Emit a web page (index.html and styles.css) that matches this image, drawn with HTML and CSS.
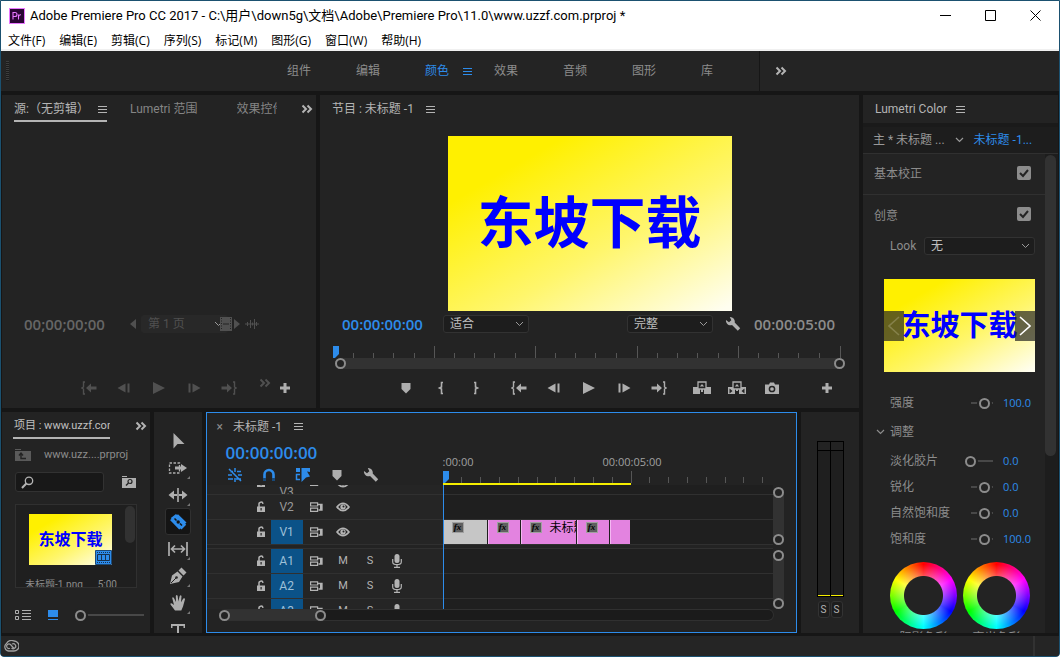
FILE: index.html
```
<!DOCTYPE html>
<html lang="zh-CN">
<head>
<meta charset="utf-8">
<title>Adobe Premiere Pro CC 2017</title>
<link rel="stylesheet" href="styles.css">
</head>
<body>
<svg class="sprite" aria-hidden="true">
  <symbol id="menu" viewBox="0 0 9 9"><path d="M0 1.500h9M0 4.500h9M0 7.500h9" fill="none" stroke="currentColor"/></symbol>
  <symbol id="more" viewBox="0 0 12 10"><path d="M1.500 1.500L5 5 1.500 8.500M6.500 1.500L10 5 6.500 8.500" fill="none" stroke="currentColor" stroke-width="2"/></symbol>
  <symbol id="plus" viewBox="0 0 16 16"><path d="M6.500 3h3v3.500H13v3H9.500V13h-3V9.500H3v-3h3.500z" fill="currentColor"/></symbol>
  <symbol id="marker" viewBox="0 0 16 16"><path d="M3.500 3h9v6L8 13.500 3.500 9z" fill="currentColor"/></symbol>
  <symbol id="mark-in" viewBox="0 0 16 16"><path d="M10 2.500H8.500v4.500L6.500 8l2 1v4.500H10" fill="none" stroke="currentColor" stroke-width="1.600"/></symbol>
  <symbol id="mark-out" viewBox="0 0 16 16"><path d="M6 2.500h1.500v4.500l2 1-2 1v4.500H6" fill="none" stroke="currentColor" stroke-width="1.600"/></symbol>
  <symbol id="go-in" viewBox="0 0 16 16"><path d="M4 2H2.500v5L1 8l1.500 1v5H4" fill="none" stroke="currentColor" stroke-width="1.400"/><path d="M5 8l5-4.500V6.500h5.500v3H10v3z" fill="currentColor"/></symbol>
  <symbol id="go-out" viewBox="0 0 16 16"><path d="M12 2h1.500v5L15 8l-1.500 1v5H12" fill="none" stroke="currentColor" stroke-width="1.400"/><path d="M11 8L6 3.500V6.500H.5v3H6v3z" fill="currentColor"/></symbol>
  <symbol id="step-back" viewBox="0 0 16 16"><path d="M9.500 3.500v9L1.500 8zM11.500 3.500h2v9h-2z" fill="currentColor"/></symbol>
  <symbol id="step-fwd" viewBox="0 0 16 16"><path d="M6.500 3.500v9l8-4.500zM2.500 3.500h2v9h-2z" fill="currentColor"/></symbol>
  <symbol id="play" viewBox="0 0 16 16"><path d="M2 2v12l12-6z" fill="currentColor"/></symbol>
  <symbol id="lift" viewBox="0 0 20 16"><path d="M1 7h7v7H1zM12 7h7v7h-7z" fill="currentColor"/><path d="M6 2h8v7H6z" fill="#232323" stroke="currentColor" stroke-width="1.300"/><path d="M7.800 6.500L10 4l2.200 2.500zM9 9h2v3H9z" fill="currentColor"/></symbol>
  <symbol id="extract" viewBox="0 0 20 16"><path d="M1 7h7v7H1zM12 7h7v7h-7z" fill="currentColor"/><path d="M6 2h8v7H6z" fill="#232323" stroke="currentColor" stroke-width="1.300"/><path d="M7.800 6.500L10 4l2.200 2.500zM9 9h2v2H9z" fill="currentColor"/><path d="M2.500 8.500L5.500 11l-3 2.500zM17.500 8.500l-3 2.500 3 2.500z" fill="#232323"/></symbol>
  <symbol id="camera" viewBox="0 0 16 16"><path d="M1 4.500h4l1-2h4l1 2h4V14H1z" fill="currentColor"/><circle cx="8" cy="9" r="2.600" fill="none" stroke="#232323" stroke-width="1.500"/></symbol>
  <symbol id="wrench" viewBox="0 0 16 16"><path d="M4.800 1A4.600 4.600 0 0 1 9.700 6.500L15.200 12.300 12.800 14.700 7 9.100A4.600 4.600 0 0 1 1 4L4 6.300 6.300 4.200z" fill="currentColor"/></symbol>
  <symbol id="left" viewBox="0 0 8 10"><path d="M7 0v10L1 5z" fill="currentColor"/></symbol>
  <symbol id="right" viewBox="0 0 8 10"><path d="M1 0v10l6-5z" fill="currentColor"/></symbol>
  <symbol id="film" viewBox="0 0 12 14"><path d="M0 0h12v14H0z" fill="currentColor"/><path d="M1.500 1v12M10.500 1v12" stroke="#232323" stroke-dasharray="1 1.500"/><path d="M3 7h6" stroke="#232323"/></symbol>
  <symbol id="wave" viewBox="0 0 14 10"><path d="M0 5h14M2.500 3v4M5.500 1v8M7.500 3.500v3M9.500 0v10M11.500 3v4" stroke="currentColor" fill="none"/></symbol>
  <symbol id="lock" viewBox="0 0 10 12"><path d="M1 5.500h8V11H1z" fill="currentColor"/><path d="M3 6V3.500a2 2 0 0 1 4-.7" fill="none" stroke="currentColor" stroke-width="1.500"/><path d="M4.500 7h1.200v2.500H4.500z" fill="#232323"/></symbol>
  <symbol id="sync" viewBox="0 0 13 11"><path d="M.6.800h7v3.200h-7zM.6 6.200h7v3.200h-7z" fill="none" stroke="currentColor" stroke-width="1.200"/><path d="M7.500 2.500H12v5.500H8.500" fill="none" stroke="currentColor" stroke-width="1.300"/><path d="M10 2h2v6h-2z" fill="currentColor"/></symbol>
  <symbol id="eye" viewBox="0 0 14 10"><path d="M1 5Q7-2.500 13 5 7 12.500 1 5z" fill="none" stroke="currentColor" stroke-width="1.700"/><circle cx="7" cy="5" r="2.700" fill="currentColor"/><circle cx="7.500" cy="4.500" r="1" fill="#232323"/></symbol>
  <symbol id="mic" viewBox="0 0 10 14"><rect x="2.500" y="0" width="5" height="9" rx="2.500" fill="currentColor"/><path d="M.7 5v3q0 2.700 4.300 2.700T9.300 8V5M5 11v2M2 13.300h6" fill="none" stroke="currentColor" stroke-width="1.200"/></symbol>
  <symbol id="magnify" viewBox="0 0 13 13"><circle cx="8" cy="4.800" r="3.700" fill="none" stroke="currentColor" stroke-width="1.300"/><path d="M5.300 7.500L1 12" stroke="currentColor" stroke-width="2"/></symbol>
  <symbol id="chev" viewBox="0 0 9 6"><path d="M1 1l3.500 3.500L8 1" fill="none" stroke="currentColor" stroke-width="1.200"/></symbol>
  <symbol id="head" viewBox="0 0 6 12"><path d="M0 0h6v8L2 12H0z" fill="#2d8ceb"/></symbol>
</svg>

<div class="window">
  <header class="titlebar">
    <svg class="app-logo" viewBox="0 0 16 16" aria-hidden="true"><rect x=".5" y=".5" width="15" height="15" fill="#2a0634" stroke="#e878ff"/><path d="M4 11.500v-7h2a1.900 1.900 0 0 1 0 4H4M9.500 11.500v-5M9.500 8.500q.5-1.800 2.500-1.700" fill="none" stroke="#e878ff" stroke-width="1.100"/></svg>
    <h1 class="title">Adobe Premiere Pro CC 2017 - C:\用户\down5g\文档\Adobe\Premiere Pro\11.0\www.uzzf.com.prproj *</h1>
    <div class="win-buttons">
      <button aria-label="最小化"><svg viewBox="0 0 11 11"><path d="M0 5.500h11" stroke="#000"/></svg></button>
      <button aria-label="最大化"><svg viewBox="0 0 11 11"><path d="M.5.5h10v10H.5z" fill="none" stroke="#000"/></svg></button>
      <button aria-label="关闭"><svg viewBox="0 0 11 11"><path d="M.5.5l10 10M10.500.5l-10 10" stroke="#000"/></svg></button>
    </div>
  </header>
  <nav class="menubar">
    <button>文件(F)</button><button>编辑(E)</button><button>剪辑(C)</button><button>序列(S)</button><button>标记(M)</button><button>图形(G)</button><button>窗口(W)</button><button>帮助(H)</button>
  </nav>

  <nav class="workspaces">
    <span class="grip"></span>
    <div class="ws-list">
      <button>组件</button><button>编辑</button><button class="active">颜色<svg class="i9"><use href="#menu"/></svg></button><button>效果</button><button>音频</button><button>图形</button><button>库</button>
    </div>
    <button class="ws-more" aria-label="更多工作区"><svg class="i-more"><use href="#more"/></svg></button>
  </nav>

  <main class="panels">
    <div class="left-area">
      <div class="row-top">
        <section class="panel source">
          <div class="tabs">
            <button class="tab active">源:（无剪辑）<svg class="i9"><use href="#menu"/></svg></button>
            <button class="tab dim">Lumetri 范围</button>
            <button class="tab dim cut">效果控件</button>
            <button class="tabs-more" aria-label="更多面板"><svg class="i-more"><use href="#more"/></svg></button>
          </div>
          <div class="space"></div>
          <div class="source-info">
            <span class="timecode">00;00;00;00</span>
            <div class="pager">
              <button aria-label="上一页"><svg class="i-arrow"><use href="#left"/></svg></button>
              <select aria-label="页" disabled><option>第 1 页</option></select>
              <svg class="i-film"><use href="#film"/></svg>
              <button aria-label="下一页"><svg class="i-arrow"><use href="#right"/></svg></button>
              <svg class="i-wave"><use href="#wave"/></svg>
            </div>
          </div>
          <div class="transport">
            <div class="group">
              <button aria-label="转到入点"><svg class="i16"><use href="#go-in"/></svg></button>
              <button aria-label="后退一帧"><svg class="i16"><use href="#step-back"/></svg></button>
              <button aria-label="播放"><svg class="i16"><use href="#play"/></svg></button>
              <button aria-label="前进一帧"><svg class="i16"><use href="#step-fwd"/></svg></button>
              <button aria-label="转到出点"><svg class="i16"><use href="#go-out"/></svg></button>
            </div>
            <div class="group tight">
              <button class="raised" aria-label="更多"><svg class="i-more"><use href="#more"/></svg></button>
              <button class="bright" aria-label="按钮编辑器"><svg class="i16"><use href="#plus"/></svg></button>
            </div>
          </div>
        </section>

        <section class="panel program">
          <div class="tabs"><button class="tab">节目 : 未标题 -1<svg class="i9"><use href="#menu"/></svg></button></div>
          <div class="viewer"><div class="art">东坡下载</div></div>
          <div class="program-info">
            <span class="timecode blue">00:00:00:00</span>
            <select class="zoom" aria-label="缩放级别"><option>适合</option></select>
            <select class="quality" aria-label="播放分辨率"><option>完整</option></select>
            <button aria-label="设置"><svg class="i16"><use href="#wrench"/></svg></button>
            <span class="timecode">00:00:05:00</span>
          </div>
          <div class="mini-ruler">
            <svg class="head"><use href="#head"/></svg>
            <svg class="ticks" viewBox="0 0 508 12" preserveAspectRatio="none"><path d="M101.500 0v12M202.500 0v12M304.500 0v12M405.500 0v12M507.500 0v12M20.500 7v5M40.500 7v5M60.500 7v5M81.500 7v5M121.500 7v5M141.500 7v5M161.500 7v5M182.500 7v5M222.500 7v5M242.500 7v5M262.500 7v5M283.500 7v5M324.500 7v5M344.500 7v5M364.500 7v5M385.500 7v5M425.500 7v5M445.500 7v5M465.500 7v5M486.500 7v5" stroke="#565656"/></svg>
          </div>
          <div class="zoombar"><i></i><i></i></div>
          <div class="transport">
            <div class="group">
              <button aria-label="添加标记"><svg class="i16"><use href="#marker"/></svg></button>
              <button aria-label="标记入点"><svg class="i16"><use href="#mark-in"/></svg></button>
              <button aria-label="标记出点"><svg class="i16"><use href="#mark-out"/></svg></button>
            </div>
            <div class="group">
              <button aria-label="转到入点"><svg class="i16"><use href="#go-in"/></svg></button>
              <button aria-label="后退一帧"><svg class="i16"><use href="#step-back"/></svg></button>
              <button aria-label="播放"><svg class="i16"><use href="#play"/></svg></button>
              <button aria-label="前进一帧"><svg class="i16"><use href="#step-fwd"/></svg></button>
              <button aria-label="转到出点"><svg class="i16"><use href="#go-out"/></svg></button>
            </div>
            <div class="group">
              <button aria-label="提升"><svg class="i20"><use href="#lift"/></svg></button>
              <button aria-label="提取"><svg class="i20"><use href="#extract"/></svg></button>
              <button aria-label="导出帧"><svg class="i16"><use href="#camera"/></svg></button>
            </div>
            <button class="last" aria-label="按钮编辑器"><svg class="i16"><use href="#plus"/></svg></button>
          </div>
        </section>
      </div>

      <div class="row-bottom">
        <section class="panel project">
          <div class="tabs">
            <button class="tab active cut">项目 : www.uzzf.com</button>
            <button class="tabs-more" aria-label="更多面板"><svg class="i-more"><use href="#more"/></svg></button>
          </div>
          <div class="bin-path">
            <svg class="i16" viewBox="0 0 16 16"><path d="M0 2.500h6" stroke="#5a5a5a"/><path d="M0 4h16v10H0z" fill="#5a5a5a"/><path d="M4 8.500l2-2.500 2 2.500M6 7v4.500h5" fill="none" stroke="#232323" stroke-width="1.400"/></svg>
            <span>www.uzz....prproj</span>
          </div>
          <div class="bin-search">
            <label class="search"><svg class="i13"><use href="#magnify"/></svg><input type="text" aria-label="搜索"></label>
            <button aria-label="搜索素材箱"><svg class="i-bin" viewBox="0 0 14 12"><path d="M0 .5h5" stroke="#aeaeae"/><path d="M0 2h14v10H0z" fill="#aeaeae"/><circle cx="8" cy="5.500" r="2" fill="none" stroke="#232323" stroke-width="1.200"/><path d="M6.500 7L4 9.500" stroke="#232323" stroke-width="1.400"/></svg></button>
          </div>
          <div class="bin">
            <div class="clip-card">
              <div class="art small">东坡下载
                <svg class="seq-badge" viewBox="0 0 17 15"><path d="M.5.5h16v14H.5z" fill="#2d8ceb" stroke="#1c4a78"/><path d="M2 2.500h13M2 12.500h13" stroke="#17324f" stroke-dasharray="1 1"/><path d="M2.500 4.500h12v6h-12zM6.500 4.500v6M10.500 4.500v6" fill="none" stroke="#17324f"/></svg>
              </div>
              <div class="clip-label"><span>未标题-1.png</span><span>5:00</span></div>
            </div>
            <span class="bin-scroll"></span>
          </div>
          <div class="view-bar">
            <button aria-label="列表视图"><svg class="i16" viewBox="0 0 16 12"><path d="M.5 1.500h3v3h-3zM.5 7.500h3v3h-3z" fill="none" stroke="#aeaeae"/><path d="M7 1.500h9M7 4.500h9M7 7.500h9M7 10.500h9" stroke="#aeaeae"/></svg></button>
            <button aria-label="图标视图"><svg class="i10" viewBox="0 0 10 10"><path d="M0 0h10v7H0zM0 9h10v1H0z" fill="#2d8ceb"/></svg></button>
            <input class="slider wide" type="range" value="0" aria-label="缩略图大小">
          </div>
        </section>

        <section class="panel tools" aria-label="工具">
          <button aria-label="选择工具"><svg viewBox="0 0 20 20"><path d="M5.500 2v15.500l4-4.500h7z" fill="#aeaeae"/></svg></button>
          <button aria-label="向前选择轨道工具" class="more"><svg viewBox="0 0 20 20"><path d="M1.500 5h10v10h-10z" fill="none" stroke="#aeaeae" stroke-width="1.300" stroke-dasharray="2.500 1.500"/><path d="M7 8.500h6V6l6 4-6 4v-2.500H7z" fill="#aeaeae"/></svg></button>
          <button aria-label="波纹编辑工具" class="more"><svg viewBox="0 0 20 20"><path d="M9.200 3h1.600v14H9.200zM.5 10L6 5.500v3.500h3v2H6v3.500zM19.500 10L14 5.500v3.500h-3v2h3v3.500z" fill="#aeaeae"/></svg></button>
          <button aria-label="剃刀工具" class="chosen"><svg viewBox="0 0 20 20"><path d="M2 8l1.500-1-.7-1L8 2l1 1 1-.7 8.500 8.200-1.300 1.200 1 1L13.500 17.500l-1-1-1.300 1z" fill="#2d8ceb"/><path d="M6.500 6.500l2 2M12 11.500l2 2" stroke="#141414" stroke-width="1.500"/><circle cx="10.200" cy="10" r="1.700" fill="#141414"/></svg></button>
          <button aria-label="外滑工具" class="more"><svg viewBox="0 0 20 20"><path d="M1 3v14M19 3v14M3 10h14M7 6.500L3.500 10 7 13.500M13 6.500l3.500 3.500-3.500 3.500" fill="none" stroke="#aeaeae" stroke-width="1.700"/></svg></button>
          <button aria-label="钢笔工具" class="more"><svg viewBox="0 0 20 20"><path d="M2 18l2-8.500 5.500-4 5 5-3.500 5.500zM10.500 4.500l3-3 5 5-3 3z" fill="#aeaeae"/><path d="M3 17l5-5" stroke="#232323"/><circle cx="8.500" cy="11.500" r="1.300" fill="#232323"/></svg></button>
          <button aria-label="手形工具" class="more"><svg viewBox="0 0 20 20"><path d="M7 17.500L2.500 11.500Q2 9.800 4 10.500L6 12 4.200 5Q4.600 3.600 5.800 4.700L8 9 7.800 3Q8.700 1 9.700 3L10.300 8.500 11.700 3Q13 1.500 13.500 3.300L13 9.300 15.300 5.500Q17 4.800 17 6.200L15 13.500 13.300 17.500z" fill="#aeaeae"/></svg></button>
          <button aria-label="文字工具"><svg viewBox="0 0 20 20"><path d="M3 4h14v4h-1.500V6H11v11H9V6H4.500v2H3z" fill="#aeaeae"/></svg></button>
        </section>

        <section class="panel timeline">
          <div class="tabs"><button class="close-tab" aria-label="关闭">×</button><button class="tab">未标题 -1<svg class="i9"><use href="#menu"/></svg></button></div>
          <div class="tl-head">
            <div class="tl-controls">
              <span class="timecode big blue">00:00:00:00</span>
              <div class="tl-icons">
                <button class="blue" aria-label="作为嵌套插入"><svg class="i16" viewBox="0 0 16 16"><path d="M1 8h4M11 8h4M3 4.500h3M10 4.500h4M1 12h5M9 12h5M8 1v4M8 11v4M2 2l12 12" fill="none" stroke="currentColor" stroke-width="1.500"/></svg></button>
                <button class="blue" aria-label="对齐"><svg class="i16" viewBox="0 0 16 16"><path d="M3.500 14V7.500a4.500 4.500 0 0 1 9 0V14" fill="none" stroke="currentColor" stroke-width="2.600"/><path d="M2 11h3v3H2zM11 11h3v3h-3z" fill="#174878"/></svg></button>
                <button class="blue" aria-label="链接选择项"><svg class="i16" viewBox="0 0 16 16"><path d="M1 1h4v4H1zM6.500 1H15v4l-3-.5 3 5-4 1L6.500 15z" fill="currentColor"/><path d="M5 7.500H1.500v5H5" fill="none" stroke="currentColor" stroke-width="1.500"/></svg></button>
                <button aria-label="添加标记"><svg class="i16"><use href="#marker"/></svg></button>
                <button aria-label="时间轴显示设置"><svg class="i16"><use href="#wrench"/></svg></button>
              </div>
            </div>
            <div class="tl-ruler">
              <div class="tl-times"><span>:00:00</span><span>00:00:05:00</span></div>
              <svg class="tl-ticks" viewBox="0 0 330 12"><path d="M18.500 6v6M37.500 6v6M56.500 6v6M75.500 6v6M94.500 6v6M112.500 6v6M131.500 6v6M150.500 6v6M169.500 6v6M188.500 0v12M206.500 6v6M225.500 6v6M244.500 6v6M263.500 6v6M282.500 6v6M300.500 6v6M319.500 6v6" stroke="#565656"/></svg>
              <div class="render-bar"></div>
              <svg class="head"><use href="#head"/></svg>
            </div>
          </div>
          <div class="tl-body">
            <div class="track-heads">
              <div class="th part"><svg class="i-lock"><use href="#lock"/></svg><b>V3</b><svg class="i-sync"><use href="#sync"/></svg><svg class="i-eye"><use href="#eye"/></svg></div>
              <div class="th"><button aria-label="锁定"><svg class="i-lock"><use href="#lock"/></svg></button><b>V2</b><button aria-label="同步锁定"><svg class="i-sync"><use href="#sync"/></svg></button><button aria-label="显示"><svg class="i-eye"><use href="#eye"/></svg></button></div>
              <div class="th on"><button aria-label="锁定"><svg class="i-lock"><use href="#lock"/></svg></button><b>V1</b><button aria-label="同步锁定"><svg class="i-sync"><use href="#sync"/></svg></button><button aria-label="显示"><svg class="i-eye"><use href="#eye"/></svg></button></div>
              <div class="divide"></div>
              <div class="th on"><button aria-label="锁定"><svg class="i-lock"><use href="#lock"/></svg></button><b>A1</b><button aria-label="同步锁定"><svg class="i-sync"><use href="#sync"/></svg></button><button>M</button><button>S</button><button aria-label="录音"><svg class="i-mic"><use href="#mic"/></svg></button></div>
              <div class="th on"><button aria-label="锁定"><svg class="i-lock"><use href="#lock"/></svg></button><b>A2</b><button aria-label="同步锁定"><svg class="i-sync"><use href="#sync"/></svg></button><button>M</button><button>S</button><button aria-label="录音"><svg class="i-mic"><use href="#mic"/></svg></button></div>
              <div class="th on"><button aria-label="锁定"><svg class="i-lock"><use href="#lock"/></svg></button><b>A3</b><button aria-label="同步锁定"><svg class="i-sync"><use href="#sync"/></svg></button><button>M</button><button>S</button><button aria-label="录音"><svg class="i-mic"><use href="#mic"/></svg></button></div>
            </div>
            <div class="lanes">
              <div class="lane part"></div>
              <div class="lane"></div>
              <div class="lane">
                <div class="clip grey c43"><i class="fx">fx</i></div>
                <div class="clip c32"><i class="fx">fx</i></div>
                <div class="clip c55"><i class="fx">fx</i><span>未标题</span></div>
                <div class="clip c32"><i class="fx">fx</i></div>
                <div class="clip c20"></div>
              </div>
              <div class="divide"></div>
              <div class="lane"></div>
              <div class="lane"></div>
              <div class="lane"></div>
            </div>
            <div class="vbars"><div class="vbar"><i></i><i></i></div><div class="vbar"><i></i><i></i></div></div>
          </div>
          <div class="hbar"><div class="hthumb"><i></i><i></i></div></div>
        </section>

        <section class="panel meters">
          <div class="meter"><div></div><div></div></div>
          <div class="solo"><button>S</button><button>S</button></div>
        </section>
      </div>
    </div>

    <section class="panel lumetri">
      <div class="tabs"><button class="tab">Lumetri Color<svg class="i9"><use href="#menu"/></svg></button></div>
      <div class="master">
        <button>主 * 未标题 ...</button>
        <svg class="i-chev"><use href="#chev"/></svg>
        <button class="blue">未标题 -1...</button>
      </div>
      <div class="lum-body">
        <div class="lum-content">
          <label class="section-head ruled"><span>基本校正</span><input type="checkbox" checked></label>
          <label class="section-head"><span>创意</span><input type="checkbox" checked></label>
          <div class="look"><label for="look">Look</label><select id="look"><option>无</option></select></div>
          <div class="preview">
            <button aria-label="上一个" class="faint"><svg viewBox="0 0 12 20"><path d="M11 1L1 10l10 9" fill="none" stroke="currentColor" stroke-width="1.600"/></svg></button>
            <div class="art medium">东坡下载</div>
            <button aria-label="下一个"><svg viewBox="0 0 12 20"><path d="M1 1l10 9-10 9" fill="none" stroke="currentColor" stroke-width="1.600"/></svg></button>
          </div>
          <div class="param"><label for="p1">强度</label><input class="slider" id="p1" type="range" value="80"><output>100.0</output></div>
          <button class="adjust"><svg class="i-chev"><use href="#chev"/></svg>调整</button>
          <div class="param"><label for="p2">淡化胶片</label><input class="slider" id="p2" type="range" value="0"><output>0.0</output></div>
          <div class="param"><label for="p3">锐化</label><input class="slider" id="p3" type="range" value="80"><output>0.0</output></div>
          <div class="param"><label for="p4">自然饱和度</label><input class="slider" id="p4" type="range" value="80"><output>0.0</output></div>
          <div class="param"><label for="p5">饱和度</label><input class="slider" id="p5" type="range" value="80"><output>100.0</output></div>
          <div class="wheels">
            <figure><div class="wheel"></div><figcaption>阴影色彩</figcaption></figure>
            <figure><div class="wheel"></div><figcaption>高光色彩</figcaption></figure>
          </div>
        </div>
        <div class="lum-scroll"><span></span></div>
      </div>
    </section>
  </main>

  <footer class="status">
    <svg viewBox="0 0 16 12" aria-hidden="true"><path d="M5.500 11A4.200 4.200 0 0 1 3.500 3.500 5.500 5.500 0 0 1 11 1a5 5 0 0 1 0 10z" fill="none" stroke="#a0a0a0" stroke-width="1.300"/><path d="M11 8.500L7.500 4.500a2.300 2.300 0 1 0-.5 3.700M8.500 8a2.500 2.500 0 1 0 .5-4" fill="none" stroke="#a0a0a0" stroke-width="1.200"/></svg>
    <span class="status-end"></span>
  </footer>
</div>
</body>
</html>
```

FILE: styles.css
```
* { box-sizing: border-box; }

body {
  margin: 0;
  background: #fff;
  color: #b4b4b4;
  font: 12px/16px Roboto, "Noto Sans CJK SC", sans-serif;
}

button {
  margin: 0;
  padding: 0;
  border: 0;
  background: none;
  color: inherit;
  font: inherit;
  white-space: nowrap;
}

svg { display: block; flex: none; }
.sprite { position: absolute; width: 0; height: 0; }

.i9 { width: 9px; height: 9px; }
.i10 { width: 10px; height: 10px; }
.i13 { width: 13px; height: 13px; }
.i16 { width: 16px; height: 16px; }
.i20 { width: 20px; height: 16px; }
.i-more { width: 12px; height: 10px; }
.i-arrow { width: 8px; height: 10px; }
.i-film { width: 12px; height: 14px; }
.i-wave { width: 14px; height: 10px; }
.i-lock { width: 10px; height: 12px; }
.i-sync { width: 13px; height: 11px; }
.i-eye { width: 14px; height: 10px; }
.i-mic { width: 10px; height: 14px; }
.i-bin { width: 14px; height: 12px; }
.i-chev { width: 9px; height: 6px; }

.blue { color: #2d8ceb; }

/* window frame */
.window {
  display: flex;
  flex-direction: column;
  height: 100vh;
  border: 1px solid #1b5170;
  border-radius: 0 0 4px 4px;
  background: #161616;
  overflow: hidden;
}

.titlebar {
  display: flex;
  align-items: center;
  height: 29px;
  padding-left: 8px;
  background: #fff;
  color: #000;
}
.app-logo { width: 16px; height: 16px; margin-right: 5px; }
.title { flex: 1; margin: 0; font-size: 13px; font-weight: 400; white-space: nowrap; }
.win-buttons { display: flex; margin-right: 1px; }
.win-buttons button { display: grid; place-items: center; width: 45px; height: 29px; }
.win-buttons svg { width: 11px; height: 11px; }

.menubar {
  display: flex;
  gap: 14px;
  height: 21px;
  padding: 2px 0 0 7px;
  border-bottom: 2px solid #f0f0f0;
  background: #fff;
  color: #000;
  font-family: "Open Sans", "Noto Sans CJK SC", sans-serif;
}

.workspaces {
  display: flex;
  align-items: center;
  height: 40px;
  background: #242424;
  color: #8c8c8c;
}
.grip {
  width: 3px;
  height: 20px;
  margin-left: 5px;
  background: repeating-linear-gradient(#3c3c3c 0 1px, #1c1c1c 1px 2px);
}
.ws-list { display: flex; gap: 45px; margin-left: 278px; }
.ws-list button { display: flex; align-items: center; gap: 14px; }
.ws-list .active { margin-right: -23px; color: #2d8ceb; }
.ws-more {
  display: flex;
  align-items: center;
  height: 40px;
  margin-left: 46px;
  padding-left: 15px;
  border-left: 1px solid #161616;
  color: #b4b4b4;
}

/* panel layout */
.panels { display: flex; flex: 1; gap: 4px; min-height: 0; padding: 4px 1px 3px; }
.left-area { display: flex; flex: 1; flex-direction: column; gap: 4px; min-width: 0; }
.row-top { display: flex; flex: 313 1 0; gap: 4px; min-height: 0; }
.row-bottom { display: flex; flex: 221 1 0; gap: 4px; min-height: 0; }
.panel { display: flex; flex-direction: column; min-width: 0; background: #232323; overflow: hidden; }
.source { flex: 314 1 0; }
.program { flex: 539 1 0; }
.project { flex: 148 1 0; }
.tools { flex: 0 0 48px; }
.timeline { flex: 591 1 0; }
.meters { flex: 0 0 58px; }
.lumetri { flex: 0 0 195px; }

.tabs { display: flex; flex: none; align-items: center; height: 28px; padding-left: 12px; }
.tab { display: flex; align-items: center; gap: 12px; height: 26px; border: solid transparent; border-width: 2px 0; }
.tab.active { border-bottom-color: #b4b4b4; }
.tab.cut { overflow: hidden; }
.dim { color: #858585; }
.tabs-more { margin-left: auto; }

.timecode { color: #8c8c8c; font: 600 15px/20px "Open Sans", sans-serif; }
.timecode.blue { color: #2d8ceb; }
.timecode.big { font-size: 17px; }

select {
  height: 18px;
  padding: 0 20px 0 6px;
  border: 1px solid #323232;
  border-radius: 3px;
  appearance: none;
  background: #1d1d1d url("data:image/svg+xml,%3Csvg xmlns='http://www.w3.org/2000/svg' width='9' height='6'%3E%3Cpath d='M1 1l3.500 3.500L8 1' fill='none' stroke='%239a9a9a'/%3E%3C/svg%3E") no-repeat right 4px center;
  color: #c0c0c0;
  font: inherit;
}

/* picture shown in viewers and thumbnails */
.art {
  position: relative;
  display: grid;
  place-items: center;
  padding-bottom: 10px;
  background: linear-gradient(150deg, #fff000 20%, #fff66c 60%, #fffef0 98%);
  color: #00f;
  font: 700 56px/1 "Noto Sans CJK SC", sans-serif;
  white-space: nowrap;
}
.art.small { width: 83px; height: 51px; padding-bottom: 3px; font-size: 16px; }
.art.medium { position: absolute; inset: 0; padding-bottom: 4px; font-size: 29px; }

/* source monitor */
.source .tab.active { gap: 9px; }
.source .tab.dim { margin-left: 23px; }
.source .tab.dim.cut { width: 40px; margin-left: 39px; }
.source .tabs-more { margin-right: 3px; }
.space { flex: 1; }
.source-info { display: flex; align-items: center; justify-content: space-between; height: 20px; padding: 0 57px 0 22px; }
.source .timecode { color: #666; }
.pager { display: flex; align-items: center; color: #505050; }
.pager select { width: 87px; margin-left: 4px; border-color: #282828; background-color: #282828; color: #505050; opacity: 1; }
.pager .i-film { position: relative; margin: 0 1px 0 -8px; }
.pager .i-wave { margin-left: 4px; }

.transport { display: flex; align-items: center; gap: 23px; height: 24px; padding-left: 76px; color: #aeaeae; }
.source .transport { gap: 16px; margin: 42px 0 8px; padding-left: 77px; color: #505050; }
.group { display: flex; gap: 15px; }
.group.tight { gap: 0; }
.transport button { display: grid; place-items: center; width: 20px; height: 20px; }
.transport .bright { color: #aeaeae; }
.transport .raised { align-items: start; }
.transport .last { margin: 0 22px 0 auto; }

/* program monitor */
.viewer { display: flex; flex: 1; justify-content: center; min-height: 0; padding: 13px 0 3px; }
.viewer .art { height: 100%; aspect-ratio: 284 / 175; }
.program-info { display: flex; align-items: center; height: 20px; padding: 0 24px 0 22px; color: #aeaeae; }
.program-info .zoom { width: 86px; margin-left: 20px; }
.program-info .quality { width: 86px; margin: 0 12px 0 auto; }
.program-info button { margin-right: 13px; }
.mini-ruler { position: relative; margin: 12px 18px 0 13px; }
.mini-ruler .ticks { width: 100%; height: 12px; }
.head { position: absolute; left: 0; bottom: 0; width: 6px; height: 12px; }
.zoombar { display: flex; justify-content: space-between; height: 11px; margin: 0 14px 7px 15px; border-radius: 6px; background: #323232; }
.program .transport { margin-bottom: 8px; }

.zoombar i, .vbar i, .hthumb i { width: 11px; height: 11px; border: 2px solid #8c8c8c; border-radius: 50%; background: #232323; }

/* project */
.project .tab { width: 97px; margin-left: -1px; padding-left: 1px; color: #c0c0c0; font-size: 11px; }
.project .tabs-more { margin-right: 3px; }
.bin-path { display: flex; flex: none; align-items: center; gap: 13px; height: 30px; padding-left: 13px; color: #8c8c8c; font-size: 11px; }
.bin-search { display: flex; flex: none; align-items: center; gap: 18px; height: 24px; padding-left: 13px; }
.search { display: flex; align-items: center; width: 89px; height: 20px; padding-left: 5px; border: 1px solid #323232; border-radius: 3px; background: #181818; }
.search input { flex: 1; width: 0; padding: 0; border: 0; outline: 0; background: none; color: inherit; font: inherit; }
.bin { display: flex; flex: 1; justify-content: space-between; min-height: 0; margin: 10px 13px 0; padding: 1px 1px 0 13px; border: 1px solid #303030; background: #1f1f1f; overflow: hidden; }
.clip-card { padding-top: 8px; }
.seq-badge { position: absolute; right: 0; bottom: 0; width: 17px; height: 15px; }
.clip-label { display: flex; justify-content: space-between; gap: 12px; width: 92px; margin: 12px 0 0 -4px; color: #8c8c8c; font-size: 10px; white-space: nowrap; }
.bin-scroll { width: 10px; height: 37px; border-radius: 5px; background: #323232; }
.view-bar { display: flex; flex: none; align-items: center; gap: 17px; height: 26px; margin: 14px 6px 5px 13px; }
.view-bar .i16 { height: 12px; }

.slider { width: 28px; height: 12px; margin: 0; appearance: none; background: linear-gradient(#484848, #484848) no-repeat 6px 5px / 100% 2px; }
.slider::-webkit-slider-thumb { width: 11px; height: 11px; border: 2px solid #8c8c8c; border-radius: 50%; appearance: none; background: #232323; box-shadow: 0 0 0 2px #232323; }
.slider.wide { flex: 1; width: 0; }

/* tools */
.tools { align-items: center; padding-top: 15px; }
.tools button { position: relative; display: grid; flex: none; place-items: center; width: 26px; height: 27px; border: 1px solid transparent; border-radius: 3px; }
.tools svg { width: 20px; height: 20px; }
.tools .chosen { border-color: #303030; background: #141414; }
.tools .more::after { content: ""; position: absolute; right: 0; bottom: 1px; border-left: 3px solid transparent; border-bottom: 3px solid #777; }

/* timeline */
.timeline { border: 1px solid #2d8ceb; }
.timeline .tabs { height: 27px; padding-left: 10px; }
.close-tab { margin-right: 10px; color: #8c8c8c; }
.tl-head { display: flex; flex: none; height: 45px; }
.tl-controls { display: flex; flex: 0 0 236px; flex-direction: column; justify-content: space-between; }
.tl-controls .timecode { margin: 3px 0 0 19px; }
.tl-icons { display: flex; align-items: start; gap: 18px; height: 18px; padding-left: 20px; color: #aeaeae; }
.tl-icons .blue { color: #2d8ceb; }
.tl-ruler { position: relative; display: flex; flex: 1; flex-direction: column; justify-content: end; margin-right: 22px; min-width: 0; }
.tl-times { display: flex; gap: 129px; color: #a0a0a0; font: 11px/18px "Open Sans", sans-serif; }
.tl-ticks { width: 330px; height: 12px; }
.render-bar { width: 188px; height: 2px; background: #f5ee00; }
.tl-ruler .head { bottom: 2px; }
.tl-body { display: flex; flex: 1; min-height: 0; overflow: hidden; }
.track-heads { flex: 0 0 236px; overflow: hidden; background: #252525; }
.th { display: flex; align-items: center; height: 25px; padding-left: 49px; border-bottom: 1px solid #303030; color: #b4b4b4; }
.th > button, .th > svg { display: grid; place-items: center; flex: none; }
.th > :nth-child(1) { margin-right: 5px; }
.th > button:nth-child(n + 3) { width: 27px; }
.th b { width: 32px; color: #999; font-weight: 400; line-height: 24px; text-align: center; }
.th > button:nth-child(n + 4) { font-size: 11px; }
.th.on b { background: #0b5288; color: #9fc0d8; }
.part { height: 10px; overflow: hidden; }
.th.part { align-items: start; }
.th.part b { line-height: 14px; }
.th.part svg { margin-top: -9px; }
.th.part .i-sync { margin-left: 7px; }
.th.part .i-eye { margin: -7px 0 0 13px; }
.divide { height: 4px; border-bottom: 1px solid #303030; background: #232323; }
.lanes { flex: 1; border-left: 1px solid #2d8ceb; background: #1f1f1f; overflow: hidden; min-width: 0; }
.lane { display: flex; gap: 1px; height: 25px; border-bottom: 1px solid #303030; }
.lane.part { height: 10px; }
.clip { display: flex; flex: none; align-items: start; gap: 8px; padding: 2px 0 0 8px; border-left: 1px solid #f4b8f2; background: #e383e0; color: #000; overflow: hidden; white-space: nowrap; }
.clip.grey { padding-left: 7px; border-color: #c6c6c6; background: #c6c6c6; }
.clip span { line-height: 12px; }
.c20 { width: 20px; }
.c32 { width: 32px; }
.c43 { width: 43px; }
.c55 { width: 55px; }
.fx { flex: none; width: 12px; height: 11px; border: 1px solid #a0a0a0; background: #606060; font: italic 700 9px/9px "Liberation Serif", serif; text-align: center; }
.vbars { display: flex; flex: 0 0 11px; flex-direction: column; gap: 5px; margin: 2px 12px 0 0; }
.vbar { display: flex; flex-direction: column; justify-content: space-between; border-radius: 6px; background: #323232; height: 58px; }
.vbar + .vbar { flex: 1; }
.hbar { flex: none; height: 12px; margin: 0 22px 11px 12px; border: 1px solid #303030; border-left: 0; border-radius: 6px; background: #1b1b1b; }
.hthumb { display: flex; justify-content: space-between; width: 107px; height: 10px; border-radius: 6px; background: #323232; }

/* audio meters */
.meters { align-items: center; padding: 29px 3px 15px 0; }
.meter { display: grid; flex: 1; grid-template-columns: 1fr 1fr; gap: 1px; width: 27px; margin-left: 3px; padding: 1px; background: #000; }
.meter div { border-bottom: 1px solid #f5ee00; background: linear-gradient(#232323 0 8px, #000 8px 9px, #1f1f1f 9px); }
.solo { display: flex; gap: 1px; margin: 4px 0 0 3px; }
.solo button { width: 12px; height: 17px; border: 1px solid #333; border-radius: 3px; background: #1d1d1d; font-size: 10px; line-height: 15px; }

/* lumetri */
.lumetri .tab { gap: 9px; }
.master { display: flex; flex: none; align-items: center; gap: 10px; height: 31px; padding-left: 10px; border-top: 4px solid #1a1a1a; border-bottom: 1px solid #303030; background: #1d1d1d; color: #999; }
.lum-body { display: flex; flex: 1; min-height: 0; }
.lum-content { flex: 1; min-width: 0; overflow: hidden; color: #8c8c8c; }
.section-head { display: flex; align-items: center; justify-content: space-between; height: 41px; padding: 0 14px 0 11px; }
.section-head.ruled { border-bottom: 1px solid #303030; }
.section-head input { width: 14px; height: 14px; margin: 0 0 3px; border-radius: 2px; appearance: none; background: #8c8c8c url("data:image/svg+xml,%3Csvg xmlns='http://www.w3.org/2000/svg' width='14' height='14'%3E%3Cpath d='M3 7l3 3 5-6' fill='none' stroke='%23232323' stroke-width='2'/%3E%3C/svg%3E") center; }
.look { display: flex; align-items: center; gap: 7px; height: 20px; padding: 0 10px 0 27px; }
.look select { width: 111px; margin-left: auto; }
.preview { position: relative; display: flex; align-items: center; justify-content: space-between; height: 93px; margin: 23px 10px 18px 21px; }
.preview button { position: relative; z-index: 1; display: grid; place-items: center; width: 20px; height: 30px; background: rgba(35, 35, 35, .7); color: #fff; }
.preview .faint { color: #85814b; }
.preview svg { width: 12px; height: 20px; }
.param { display: grid; grid-template-columns: 1fr 28px 32px; gap: 10px; align-items: center; height: 26px; padding: 0 10px 0 27px; }
.param label { white-space: nowrap; }
.param output { color: #2d8ceb; font: 11px/16px "Open Sans", sans-serif; }
.adjust { display: flex; align-items: center; gap: 5px; height: 32px; padding-left: 13px; }
.wheels { display: flex; gap: 6px; margin: 10px 0 0 27px; }
figure { margin: 0; text-align: center; }
.wheel { width: 67px; height: 67px; border-radius: 50%; background: radial-gradient(circle, #232323 19px, rgba(255, 255, 255, .3) 20px, transparent 31px), conic-gradient(#f00, #f0f 60deg, #00f 120deg, #0ff 180deg, #0f0 240deg, #ff0 300deg, #f00); }
figcaption { line-height: 18px; }
.lum-scroll { flex: 0 0 13px; padding: 1px 2px 0 0; background: #1d1d1d; }
.lum-scroll span { display: block; height: 63%; border-radius: 6px; background: #323232; }

.status { display: flex; flex: none; align-items: center; justify-content: space-between; height: 20px; padding-left: 2px; background: #252525; }
.status svg { width: 16px; height: 12px; }
.status-end { width: 26px; height: 20px; border-left: 2px solid #323232; }
```
